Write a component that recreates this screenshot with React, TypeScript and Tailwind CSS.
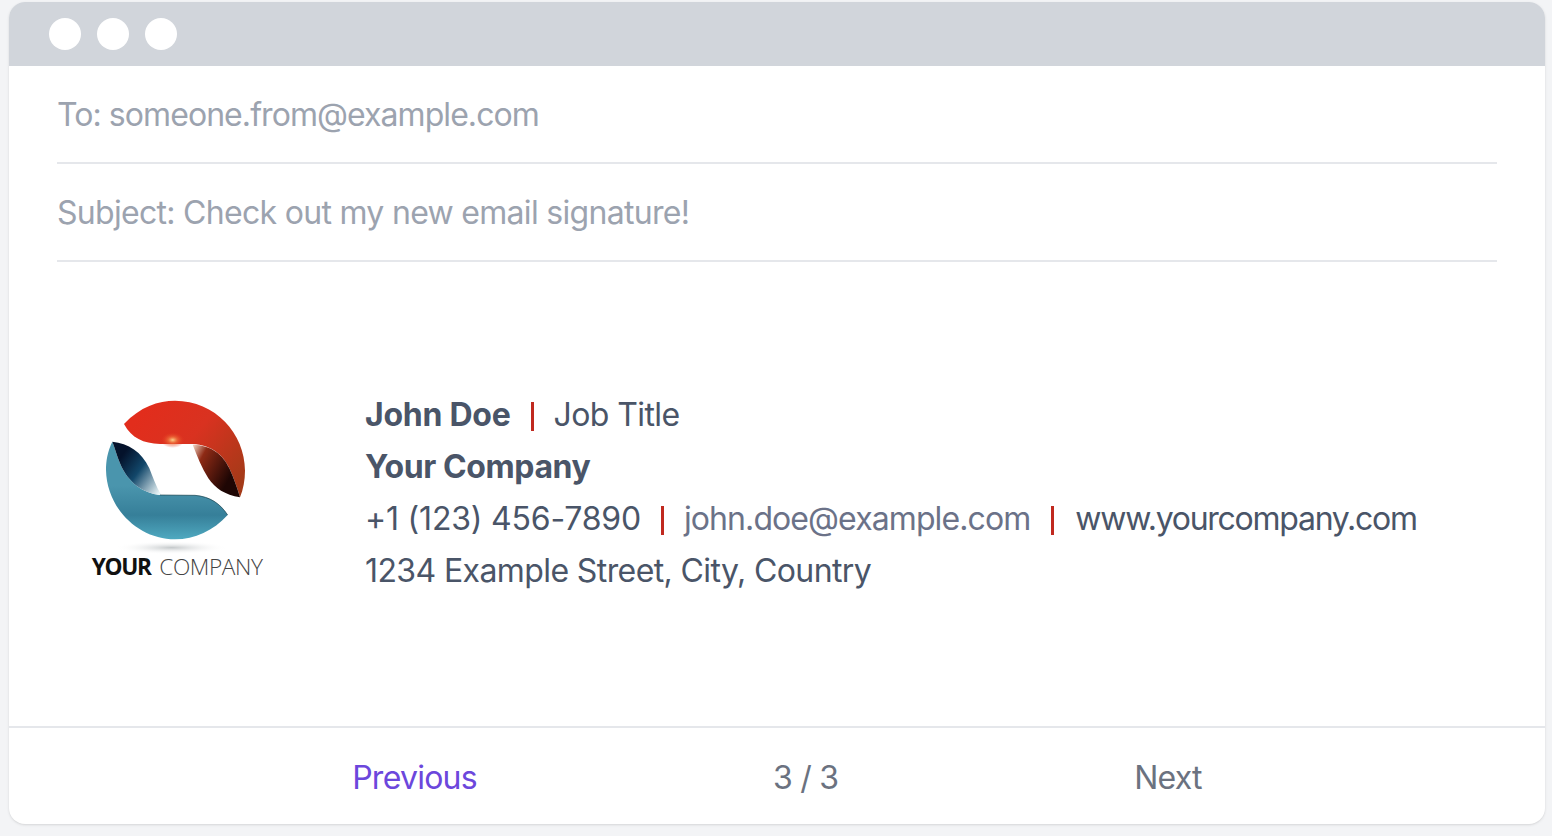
export default function App() {
  return (
    <div className="h-[836px] overflow-hidden bg-[#f3f4f6] px-[7px] pt-[2px] pr-[7px] font-['Inter',sans-serif]">
      <div className="flex h-[822px] w-[1536px] ml-[2px] flex-col overflow-hidden rounded-2xl bg-white shadow">
        {/* Window bar */}
        <div className="flex h-16 items-center gap-4 bg-[#d1d5db] px-10">
          <span className="h-8 w-8 rounded-full bg-white" />
          <span className="h-8 w-8 rounded-full bg-white" />
          <span className="h-8 w-8 rounded-full bg-white" />
        </div>

        {/* Mail fields */}
        <div className="px-12 text-[32px] leading-[48px] text-[#9ca3af]">
          <div className="border-b-2 border-[#e5e7eb] pt-[25px] pb-[23px] tracking-[-0.93px]">To: someone.from@example.com</div>
          <div className="border-b-2 border-[#e5e7eb] pt-[25px] pb-[23px] tracking-[-0.7px]">Subject: Check out my new email signature!</div>
        </div>

        {/* Signature */}
        <div className="flex flex-1 items-center pl-[51px] text-[32px] leading-[52px] text-[#4a5568] tracking-[-0.6px]">
          <Logo />
          <div className="mb-[2px] ml-[75px]">
            <div>
              <b className="font-bold tracking-[-0.25px]">John Doe</b>
              <Pipe />
              Job Title
            </div>
            <div className="font-bold tracking-[-0.4px]">Your Company</div>
            <div>
              <span className="tracking-[-0.2px]">+1 (123) 456-7890</span>
              <Pipe />
              <span className="text-[#6b7288] tracking-[-0.9px]">john.doe@example.com</span>
              <span className="ml-[21px] mr-[21px] inline-block h-[29px] w-[3px] bg-[#c0291f] align-[-5px]" />
              <span className="tracking-[-1.27px]">www.yourcompany.com</span>
            </div>
            <div>1234 Example Street, City, Country</div>
          </div>
        </div>

        {/* Pager */}
        <div className="flex h-[98px] items-center justify-center gap-[296px] border-t-2 border-[#e5e7eb] pt-1 text-[32px] tracking-[-0.75px] text-[#6b7280]">
          <span className="text-[#6c47dc]">Previous</span>
          <span>3 / 3</span>
          <span>Next</span>
        </div>
      </div>
    </div>
  );
}

function Pipe() {
  return <span className="mx-5 inline-block h-[29px] w-[3px] bg-[#c0291f] align-[-5px]" />;
}

function Logo() {
  return (
    <svg width="230" height="220" viewBox="0 0 690 660" className="mb-2 shrink-0">
      <defs>
        <linearGradient id="red" x1="0.1" y1="0.2" x2="1" y2="0.8">
          <stop offset="0" stopColor="#e22d1c" />
          <stop offset="0.45" stopColor="#d93220" />
          <stop offset="1" stopColor="#a43a18" />
        </linearGradient>
        <linearGradient id="blue" x1="0.5" y1="0.45" x2="0.5" y2="1">
          <stop offset="0" stopColor="#4a95ad" />
          <stop offset="0.55" stopColor="#367f99" />
          <stop offset="1" stopColor="#4fa9c0" />
        </linearGradient>
        <linearGradient id="redLeaf" x1="0" y1="0" x2="1" y2="0.6">
          <stop offset="0" stopColor="#f4d9c8" />
          <stop offset="0.25" stopColor="#8e2a15" />
          <stop offset="0.85" stopColor="#1e0604" />
        </linearGradient>
        <linearGradient id="blueLeaf" x1="0" y1="0.1" x2="1" y2="0.9">
          <stop offset="0.2" stopColor="#04122b" />
          <stop offset="0.55" stopColor="#12476a" />
          <stop offset="1" stopColor="#e8f4f6" />
        </linearGradient>
        <radialGradient id="glow">
          <stop offset="0" stopColor="#fbd38a" />
          <stop offset="0.4" stopColor="#f0743c" stopOpacity="0.7" />
          <stop offset="1" stopColor="#e22d1c" stopOpacity="0" />
        </radialGradient>
        <radialGradient id="shade">
          <stop offset="0" stopColor="#9ca3a6" stopOpacity="0.6" />
          <stop offset="1" stopColor="#ffffff" stopOpacity="0" />
        </radialGradient>
      </defs>
      <ellipse cx="335" cy="503" rx="170" ry="20" fill="url(#shade)" />
      <path d="M192 132 C240 80 295 62 345 62 C465 62 555 160 555 272 C555 300 550 328 540 352 C532 325 522 295 508 265 C490 225 455 195 398 192 L300 192 C250 190 215 175 192 132Z" fill="url(#red)" />
      <path d="M398 194 C455 195 490 225 508 265 C522 295 532 325 540 352 C495 345 465 325 445 295 C425 262 412 230 398 194Z" fill="url(#redLeaf)" />
      <ellipse cx="338" cy="180" rx="36" ry="24" fill="url(#glow)" />
      <path d="M157 185 C142 215 138 245 138 270 C140 385 235 478 345 478 C405 478 460 452 503 405 C480 370 450 350 405 346 L300 345 C250 340 205 310 180 250 C170 225 165 205 157 185Z" fill="url(#blue)" />
      <path d="M157 185 C205 190 245 215 268 265 C278 290 288 320 304 345 L300 345 C250 340 205 310 180 250 C170 225 165 205 157 185Z" fill="url(#blueLeaf)" />
      <path d="M300 345 L405 346 C450 350 480 370 503 405" fill="none" stroke="#16404a" strokeWidth="2" />
      <text x="95" y="585" fontFamily="'Open Sans', sans-serif" fontSize="68" fontWeight="700" fill="#111111" textLength="180">YOUR</text>
      <text x="298" y="585" fontFamily="'Open Sans', sans-serif" fontSize="68" fontWeight="300" fill="#444444" textLength="310">COMPANY</text>
    </svg>
  );
}
